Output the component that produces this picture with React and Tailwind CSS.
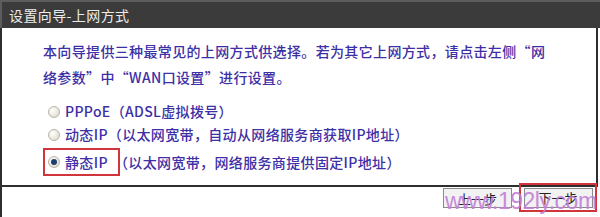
import React from "react";

const Radio = ({ checked }) => (
    <span className="relative inline-block w-[12px] h-[12px] rounded-full border border-[#b9b4a6] bg-[radial-gradient(circle_at_35%_35%,#ffffff,#d9d3c2)] shrink-0">
        {checked && (
            <span className="absolute left-[2px] top-[2px] w-[6px] h-[6px] rounded-full bg-[#1d3f6e]" />
        )}
    </span>
);

const App = () => {
    const options = [
        { label: "PPPoE", rest: "（ADSL虚拟拨号）" },
        { label: "动态IP", rest: "（以太网宽带，自动从网络服务商获取IP地址）" },
    ];

    return (
        <div
            className="relative w-[600px] h-[217px] bg-white overflow-hidden"
            style={{ fontFamily: '"Noto Sans CJK SC", "Noto Sans", sans-serif' }}
        >
            {/* title bar */}
            <div className="h-[28px] bg-[#3b3b3b] border-t-2 border-l-2 border-[#5c5c5c] flex items-center pl-[7px] text-[14px] text-[#ececec] tracking-[0.4px]">
                设置向导-上网方式
            </div>

            {/* content */}
            <div className="h-[159px] border-l-2 border-r-2 border-b-2 border-[#2e2e2e] mr-[2px] pl-[41px] pt-[10px] text-[14px] font-medium text-[#3d2fa6] tracking-[0.35px]">
                <p className="leading-[26px]">本向导提供三种最常见的上网方式供选择。若为其它上网方式，请点击左侧“网</p>
                <p className="leading-[26px]">络参数”中“WAN口设置”进行设置。</p>

                <div className="mt-[10px] flex flex-col">
                    {options.map((o, idx) => (
                        <div key={idx} className="h-[23px] flex items-center gap-[5px] pl-[5px]">
                            <Radio />
                            <span>{o.label}{o.rest}</span>
                        </div>
                    ))}
                    <div className="mt-[2px] flex items-center">
                        <div className="h-[28px] w-[77px] border-2 border-[#d2343c] flex items-center gap-[5px] pl-[3px]">
                            <Radio checked />
                            <span>静态IP</span>
                        </div>
                        <span className="-ml-[6px]">（以太网宽带，网络服务商提供固定IP地址）</span>
                    </div>
                </div>
            </div>

            {/* footer */}
            <div className="h-[30px] border-l-2 border-[#2e2e2e] flex items-start justify-end pr-[3px]">
                <button className="mt-[1px] w-[69px] h-[20px] border border-[#8a8a8a] bg-[#f2f2f2] text-[13px] text-[#222] leading-none">
                    上一步
                </button>
                <div className="-mt-[4px] ml-[7px] w-[78px] h-[29px] border-2 border-[#d2343c] flex items-center justify-center">
                    <button className="w-[69px] h-[20px] border border-[#8a8a8a] bg-[#f2f2f2] text-[13px] text-[#222] leading-none">
                        下一步
                    </button>
                </div>
            </div>

            {/* watermark */}
            <div
                className="absolute left-[445px] top-[184px] text-[23px] text-[#c27fd6] opacity-90 tracking-[-0.5px]"
                style={{ fontFamily: '"Liberation Sans", Arial, sans-serif' }}
            >
                www.192ly.com
            </div>
        </div>
    );
};

export default App;
